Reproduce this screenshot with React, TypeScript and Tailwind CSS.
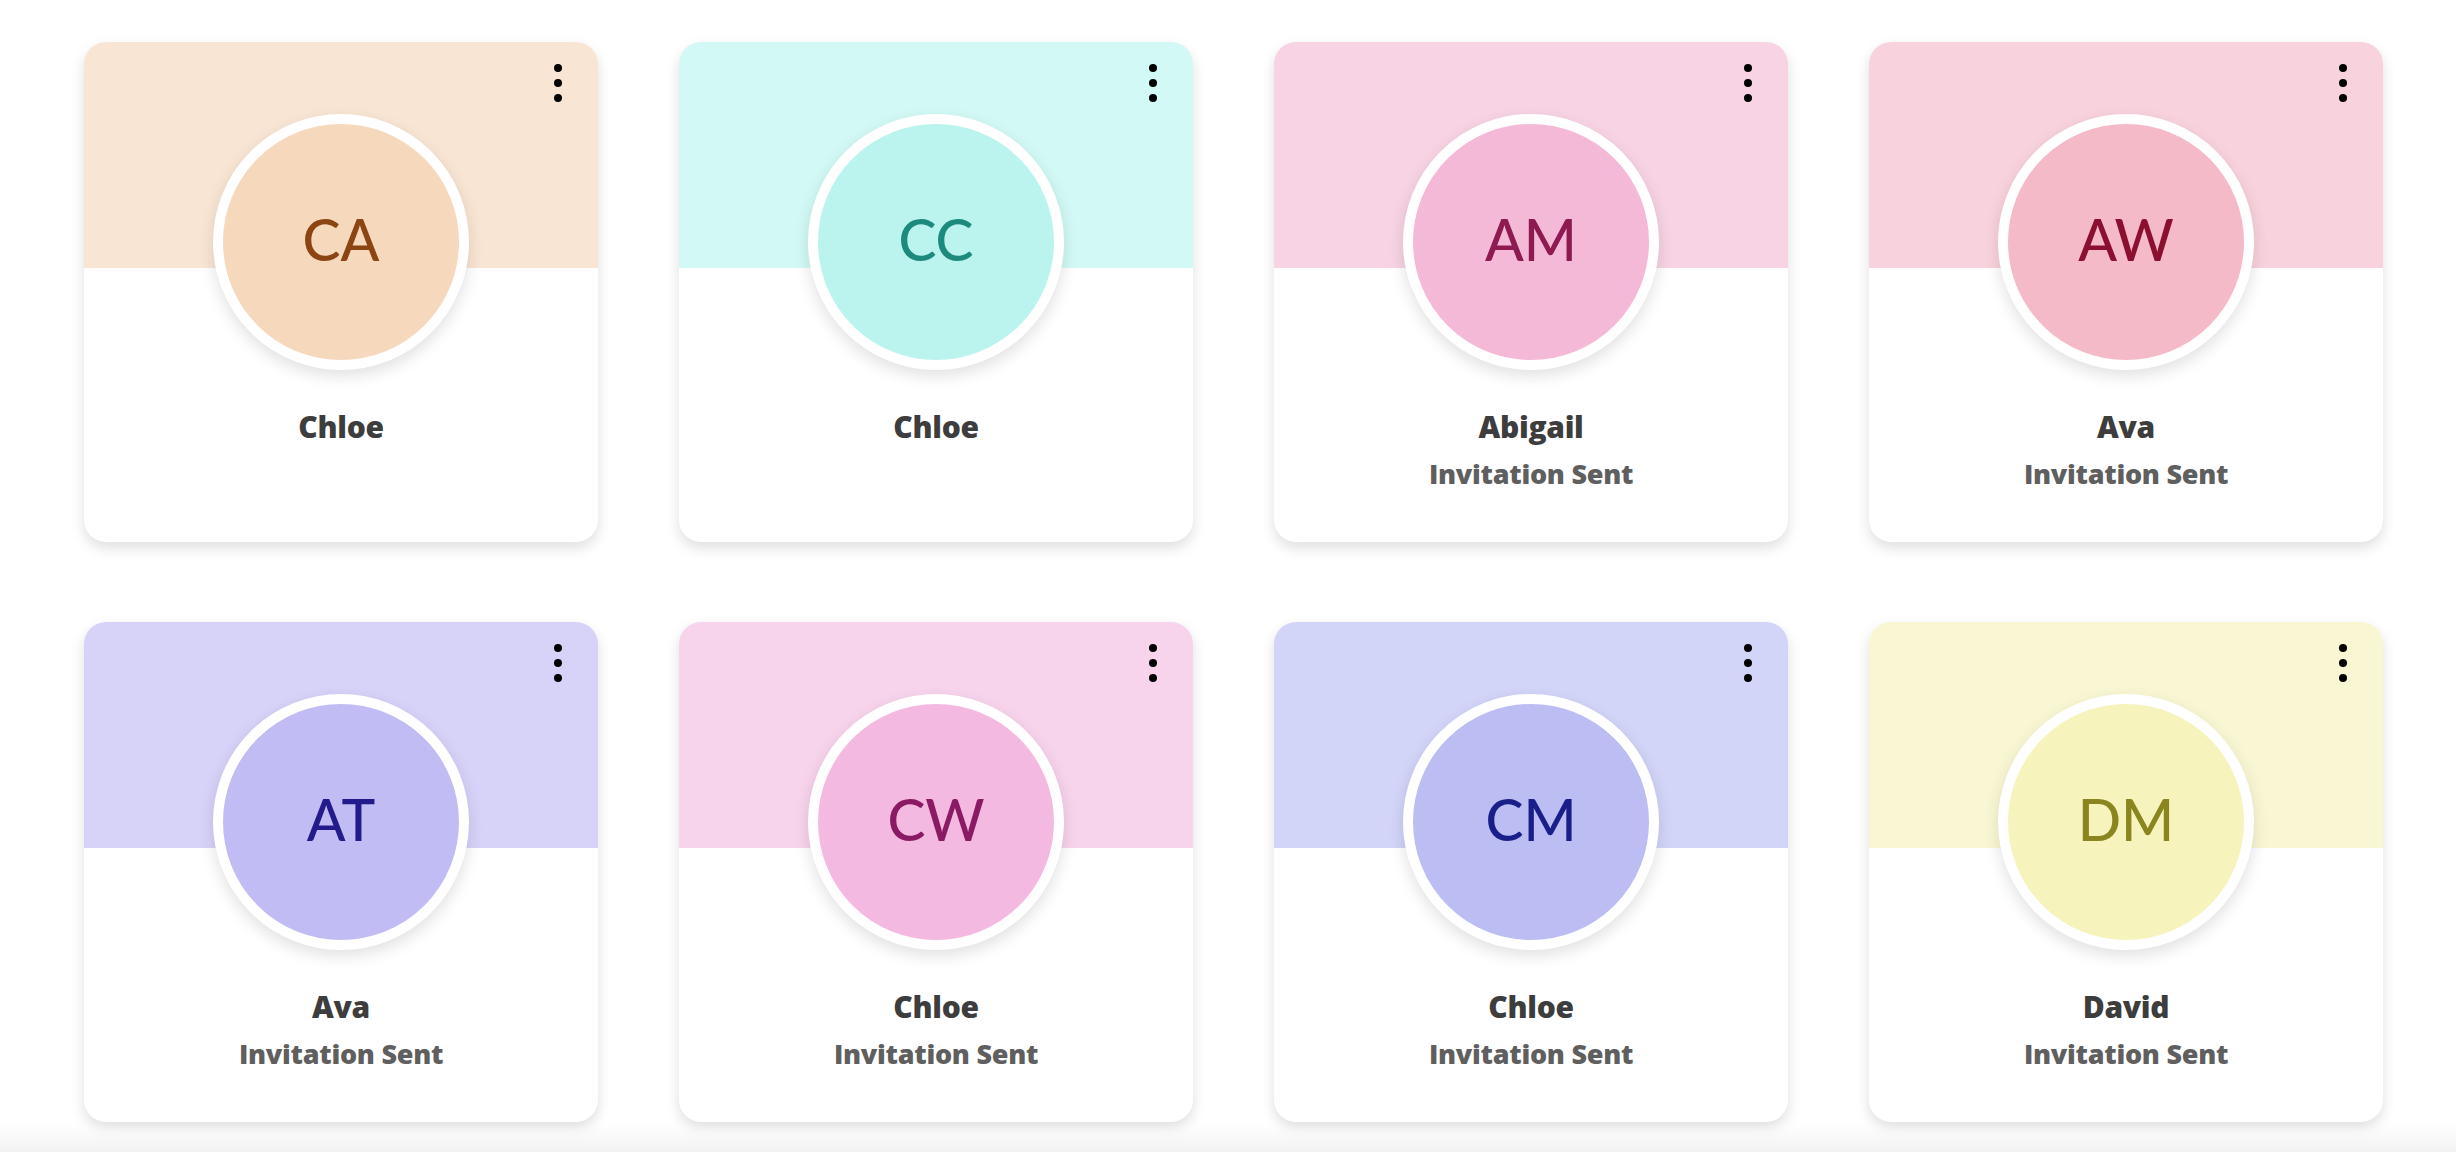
const members = [
  { initials: "CA", name: "Chloe", status: "", band: "bg-[#f9e5d3]", circle: "bg-[#f6d8bd]", text: "text-[#8b4513]" },
  { initials: "CC", name: "Chloe", status: "", band: "bg-[#d2f9f5]", circle: "bg-[#bbf4ee]", text: "text-[#1d8a7d]" },
  { initials: "AM", name: "Abigail", status: "Invitation Sent", band: "bg-[#f7d3e4]", circle: "bg-[#f5b9d8]", text: "text-[#8d1a50]" },
  { initials: "AW", name: "Ava", status: "Invitation Sent", band: "bg-[#f8d2dc]", circle: "bg-[#f4bac8]", text: "text-[#8b1030]" },
  { initials: "AT", name: "Ava", status: "Invitation Sent", band: "bg-[#d7d2f8]", circle: "bg-[#c2bcf4]", text: "text-[#231a8b]" },
  { initials: "CW", name: "Chloe", status: "Invitation Sent", band: "bg-[#f7d3ec]", circle: "bg-[#f3b9e0]", text: "text-[#8a1a64]" },
  { initials: "CM", name: "Chloe", status: "Invitation Sent", band: "bg-[#d2d4f8]", circle: "bg-[#bbbdf3]", text: "text-[#1a1e88]" },
  { initials: "DM", name: "David", status: "Invitation Sent", band: "bg-[#f9f7d3]", circle: "bg-[#f6f3bd]", text: "text-[#8b8520]" },
];

function MemberCard({ m }: { m: (typeof members)[number] }) {
  return (
    <div className="relative flex h-[500px] w-[514px] flex-col items-center rounded-[22px] bg-white shadow-[0_6px_14px_rgba(0,0,0,0.13)] overflow-hidden">
      <div className={`h-[226px] w-full ${m.band}`} />

      {/* kebab menu */}
      <button className="absolute right-[32px] top-[18px] flex flex-col items-center gap-[7px] p-1">
        <span className="h-[8px] w-[8px] rounded-full bg-black" />
        <span className="h-[8px] w-[8px] rounded-full bg-black" />
        <span className="h-[8px] w-[8px] rounded-full bg-black" />
      </button>

      <div
        className={`-mt-[154px] flex h-[256px] w-[256px] items-center justify-center rounded-full border-[10px] border-white ${m.circle} shadow-[0_6px_16px_rgba(0,0,0,0.12)]`}
      >
        <span className={`mb-[6px] font-['Lato',sans-serif] text-[57px] font-medium leading-none ${m.text}`}>
          {m.initials}
        </span>
      </div>

      <div className="mt-[40px] font-['Open_Sans',sans-serif] text-[30px] font-extrabold leading-[34px] tracking-[-0.01em] text-[#3d3d3d]">
        {m.name}
      </div>
      {m.status && (
        <div className="mt-[14px] font-['Open_Sans',sans-serif] text-[27px] font-extrabold leading-[32px] tracking-[-0.01em] text-[#5f5f5f]">
          {m.status}
        </div>
      )}
    </div>
  );
}

export default function App() {
  return (
    <div className="relative min-h-[1152px] w-full overflow-hidden bg-white">
      <div className="grid grid-cols-[repeat(4,514px)] gap-x-[81px] gap-y-[80px] pl-[84px] pt-[42px]">
        {members.map((m, i) => (
          <MemberCard key={i} m={m} />
        ))}
      </div>
      {/* bottom fade */}
      <div className="pointer-events-none absolute bottom-0 left-0 h-[28px] w-full bg-gradient-to-b from-white/0 to-[#f2f2f2]" />
    </div>
  );
}
